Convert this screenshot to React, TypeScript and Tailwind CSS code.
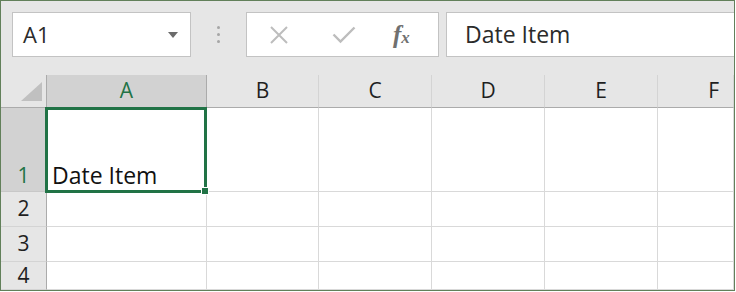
import { Fragment } from 'react'

// Excel-style name box + formula bar + top-left of the grid.

const font = { fontFamily: '"Open Sans", "Noto Sans", sans-serif' }

const cols = ['A', 'B', 'C', 'D', 'E', 'F']
const rows = [
  { n: '1', h: 'h-[84px]' },
  { n: '2', h: 'h-[35px]' },
  { n: '3', h: 'h-[35px]' },
  { n: '4', h: 'h-[28px]' },
]

function CrossIcon() {
  return (
    <svg width="20" height="18" viewBox="0 0 20 18" fill="none">
      <path d="M2 1 L18 17 M18 1 L2 17" stroke="#bdbdbd" strokeWidth="2" />
    </svg>
  )
}

function CheckIcon() {
  return (
    <svg width="24" height="18" viewBox="0 0 24 18" fill="none">
      <path d="M1.5 8.5 L8.5 15.5 L22.5 1.5" stroke="#bdbdbd" strokeWidth="2.4" />
    </svg>
  )
}

export default function App() {
  return (
    <div className="h-[292px] w-[736px] bg-white" style={font}>
      <div className="relative h-[291px] w-[735px] overflow-hidden border border-[#62805a] bg-[#e6e6e6]">
        {/* toolbar */}
        <div className="flex h-[74px] items-start pt-[11px]">
          <div className="ml-[11px] flex h-[45px] w-[179px] items-center justify-between border border-[#c3c3c3] bg-white pl-[10px] pr-[12px]">
            <span className="text-[22px] text-[#2b2b2b]">A1</span>
            <span className="h-0 w-0 border-x-[5px] border-t-[6px] border-x-transparent border-t-[#6b6b6b]" />
          </div>
          <div className="flex h-[45px] w-[55px] flex-col items-center justify-center gap-[4px]">
            <span className="size-[3px] rounded-full bg-[#a6a6a6]" />
            <span className="size-[3px] rounded-full bg-[#a6a6a6]" />
            <span className="size-[3px] rounded-full bg-[#a6a6a6]" />
          </div>
          <div className="flex h-[45px] w-[193px] items-center border border-[#c3c3c3] bg-white">
            <div className="ml-[22px] flex w-[20px] justify-center">
              <CrossIcon />
            </div>
            <div className="ml-[43px] flex w-[24px] justify-center">
              <CheckIcon />
            </div>
            <span
              className="ml-[37px] text-[25px] font-bold italic leading-none text-[#707070]"
              style={{ fontFamily: '"Liberation Serif", serif' }}
            >
              f<span className="text-[17px]">x</span>
            </span>
          </div>
          <div className="ml-[7px] flex h-[45px] flex-1 items-center border border-r-0 border-[#c3c3c3] bg-white pl-[18px]">
            <span className="text-[23px] text-[#2b2b2b]">Date Item</span>
          </div>
        </div>

        {/* grid */}
        <div className="grid grid-cols-[46px_160px_112px_113px_113px_113px_1fr]">
          <div className="relative h-[33px] border-b border-r border-[#ababab] bg-[#e6e6e6]">
            <span className="absolute bottom-[6px] right-[4px] h-0 w-0 border-b-[19px] border-l-[21px] border-b-[#c0c0c0] border-l-transparent" />
          </div>
          {cols.map((c, i) => (
            <div
              key={c}
              className={
                i === 0
                  ? 'flex h-[33px] items-center justify-center border-b border-r border-[#ababab] bg-[#d2d2d2] text-[21px] text-[#217346]'
                  : 'flex h-[33px] items-center justify-center border-b border-r border-[#ababab] border-r-[#d4d4d4] bg-[#e6e6e6] text-[21px] text-[#1f1f1f]'
              }
            >
              {c === 'F' ? <span className="ml-auto mr-[14px]">{c}</span> : c}
            </div>
          ))}
          {rows.map((r, ri) => (
            <Fragment key={r.n}>
              <div
                className={
                  ri === 0
                    ? `flex ${r.h} items-end justify-center border-b border-r border-[#ababab] border-b-[#c8c8c8] bg-[#d2d2d2] pb-[1px] text-[21px] leading-[30px] text-[#217346]`
                    : `flex ${r.h} items-center justify-center border-b border-r border-[#ababab] border-b-[#d4d4d4] bg-[#e6e6e6] text-[21px] text-[#1f1f1f]`
                }
              >
                {r.n}
              </div>
              {cols.map((c) => (
                <div key={c} className={`${r.h} border-b border-r border-[#d9d9d9] bg-white`}>
                  {ri === 0 && c === 'A' ? (
                    <div className="flex h-full items-end pb-[1px] pl-[5px] text-[23px] leading-[30px] text-[#111]">
                      Date Item
                    </div>
                  ) : null}
                </div>
              ))}
            </Fragment>
          ))}
        </div>

        {/* selection box over A1 */}
        <div className="absolute left-[44px] top-[106px] h-[86px] w-[162px] border-[3px] border-[#217346]" />
        <div className="absolute left-[200px] top-[186px] size-[8px] border border-white bg-[#217346]" />
      </div>
    </div>
  )
}
